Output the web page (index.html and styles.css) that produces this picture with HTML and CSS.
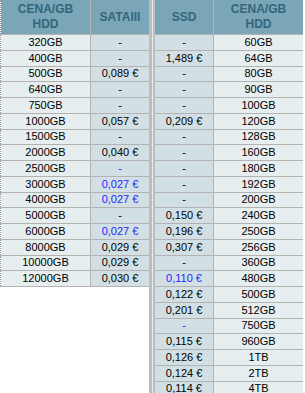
FILE: index.html
```html
<!DOCTYPE html>
<html>
<head>
<meta charset="utf-8">
<link rel="stylesheet" href="styles.css">
</head>
<body>
<div class="wrap">
  <table class="tbl tbl-hdd">
    <thead>
      <tr><th class="c-size">CENA/GB<br>HDD</th><th class="c-price">SATAIII</th></tr>
    </thead>
    <tbody>
      <tr><td class="size">320GB</td><td class="price">-</td></tr>
      <tr><td class="size">400GB</td><td class="price">-</td></tr>
      <tr><td class="size">500GB</td><td class="price">0,089 €</td></tr>
      <tr><td class="size">640GB</td><td class="price">-</td></tr>
      <tr><td class="size">750GB</td><td class="price">-</td></tr>
      <tr><td class="size">1000GB</td><td class="price">0,057 €</td></tr>
      <tr><td class="size">1500GB</td><td class="price">-</td></tr>
      <tr><td class="size">2000GB</td><td class="price">0,040 €</td></tr>
      <tr><td class="size">2500GB</td><td class="price best">-</td></tr>
      <tr><td class="size">3000GB</td><td class="price best">0,027 €</td></tr>
      <tr><td class="size">4000GB</td><td class="price best">0,027 €</td></tr>
      <tr><td class="size">5000GB</td><td class="price">-</td></tr>
      <tr><td class="size">6000GB</td><td class="price best">0,027 €</td></tr>
      <tr><td class="size">8000GB</td><td class="price">0,029 €</td></tr>
      <tr><td class="size">10000GB</td><td class="price">0,029 €</td></tr>
      <tr><td class="size">12000GB</td><td class="price">0,030 €</td></tr>
    </tbody>
  </table>
  <div class="divider"></div>
  <table class="tbl tbl-ssd">
    <thead>
      <tr><th class="c-price">SSD</th><th class="c-size">CENA/GB<br>HDD</th></tr>
    </thead>
    <tbody>
      <tr><td class="price">-</td><td class="size">60GB</td></tr>
      <tr><td class="price">1,489 €</td><td class="size">64GB</td></tr>
      <tr><td class="price">-</td><td class="size">80GB</td></tr>
      <tr><td class="price">-</td><td class="size">90GB</td></tr>
      <tr><td class="price">-</td><td class="size">100GB</td></tr>
      <tr><td class="price">0,209 €</td><td class="size">120GB</td></tr>
      <tr><td class="price">-</td><td class="size">128GB</td></tr>
      <tr><td class="price">-</td><td class="size">160GB</td></tr>
      <tr><td class="price">-</td><td class="size">180GB</td></tr>
      <tr><td class="price">-</td><td class="size">192GB</td></tr>
      <tr><td class="price">-</td><td class="size">200GB</td></tr>
      <tr><td class="price">0,150 €</td><td class="size">240GB</td></tr>
      <tr><td class="price">0,196 €</td><td class="size">250GB</td></tr>
      <tr><td class="price">0,307 €</td><td class="size">256GB</td></tr>
      <tr><td class="price">-</td><td class="size">360GB</td></tr>
      <tr><td class="price best">0,110 €</td><td class="size">480GB</td></tr>
      <tr><td class="price">0,122 €</td><td class="size">500GB</td></tr>
      <tr><td class="price">0,201 €</td><td class="size">512GB</td></tr>
      <tr><td class="price best">-</td><td class="size">750GB</td></tr>
      <tr><td class="price">0,115 €</td><td class="size">960GB</td></tr>
      <tr><td class="price">0,126 €</td><td class="size">1TB</td></tr>
      <tr><td class="price">0,124 €</td><td class="size">2TB</td></tr>
      <tr><td class="price">0,114 €</td><td class="size">4TB</td></tr>
    </tbody>
  </table>
</div>
</body>
</html>
```

FILE: styles.css
```css
html, body {
  margin: 0;
  padding: 0;
  background: #ffffff;
}
body {
  font-family: "Liberation Sans", Arial, sans-serif;
  font-size: 11px;
  color: #000;
  overflow: hidden;
  height: 393px;
}
.wrap {
  display: flex;
  align-items: flex-start;
  height: 393px;
}
.tbl {
  border-collapse: collapse;
  table-layout: fixed;
}
.tbl-hdd {
  width: 149px;
  border-left: 1px dotted #9a9a9a;
}
.tbl-hdd .c-size { width: 89px; }
.tbl-ssd {
  width: 150px;
  border-left: 2px solid #bdbdbd;
}
.tbl-ssd .c-price { width: 58px; }
.divider {
  align-self: stretch;
  width: 3px;
  flex: none;
  background: #bdbdbd;
  border-right: 1px solid #e4ecee;
}
.tbl th {
  background: #7aa6b7;
  color: #33667d;
  font-weight: bold;
  font-size: 12px;
  line-height: 15px;
  height: 34px;
  padding: 0;
  text-align: center;
  vertical-align: middle;
  border: 1px solid #b3b3b3;
  border-top: none;
}
.tbl td {
  height: 14.75px;
  padding: 0;
  line-height: 13px;
  text-align: center;
  vertical-align: middle;
  border: 1px solid #b3b3b3;
  white-space: nowrap;
}
.tbl-hdd th:first-child,
.tbl-hdd td:first-child { border-left: none; }
.tbl-hdd th:last-child,
.tbl-hdd td:last-child { border-right: none; }
.tbl-ssd th:first-child,
.tbl-ssd td:first-child { border-left: none; }
.tbl-ssd th:last-child,
.tbl-ssd td:last-child { border-right: none; }
.size { background: #e6eef0; }
.price { background: #d2e0e5; }
.best { color: #1f1fff; }
```
